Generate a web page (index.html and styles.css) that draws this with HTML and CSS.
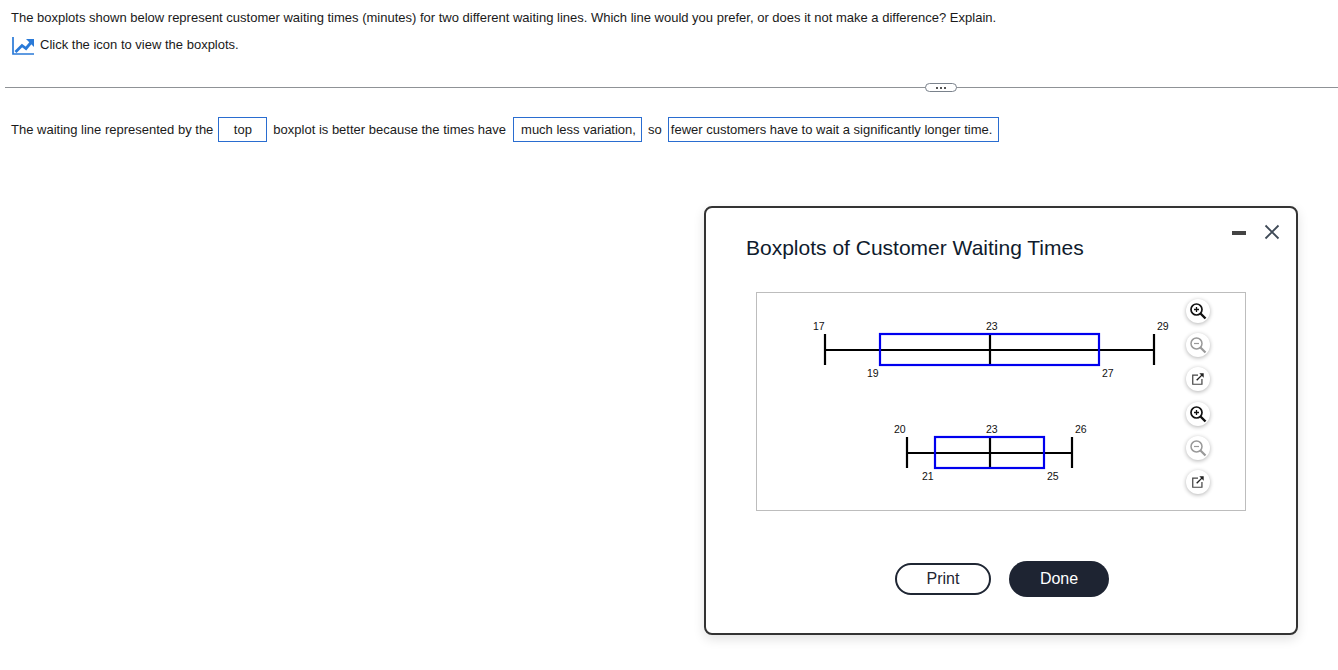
FILE: index.html
```html
<!DOCTYPE html>
<html lang="en">
<head>
    <meta charset="UTF-8">
    <title>Boxplots of Customer Waiting Times</title>
    <link rel="stylesheet" href="styles.css">
</head>
<body>
    <!-- Question -->
    <div class="question">
        <p class="question-text">The boxplots shown below represent customer waiting times (minutes) for two different waiting lines. Which line would you prefer, or does it not make a difference? Explain.</p>
        <p class="icon-line">
            <svg class="chart-icon" width="22" height="18" viewBox="0 0 22 18">
                <path d="M1 0V17H22" fill="none" stroke="#2a7ad8" stroke-width="1.7"/>
                <path d="M3.5 15L10 8.5L14 11.5L19 5.5" fill="none" stroke="#2a7ad8" stroke-width="2.8"/>
                <path d="M14 2H22V10Z" fill="#2a7ad8"/>
            </svg>
            <span>Click the icon to view the boxplots.</span>
        </p>
    </div>

    <!-- Separator -->
    <div class="separator">
        <div class="more-btn">
            <span class="dot"></span><span class="dot"></span><span class="dot"></span>
        </div>
    </div>

    <!-- Answer -->
    <div class="answer">
        <span>The waiting line represented by the</span>
        <span class="choice choice-top">top</span>
        <span>boxplot is better because the times have</span>
        <span class="choice choice-much">much less variation,</span>
        <span>so</span>
        <span class="choice choice-fewer">fewer customers have to wait a significantly longer time.</span>
    </div>

    <!-- Floating window -->
    <div class="dialog">
        <div class="dialog-controls">
            <span class="minimize"></span>
            <svg width="16" height="16" viewBox="0 0 16 16">
                <path d="M1.5 1.5L14.5 14.5M14.5 1.5L1.5 14.5" stroke="#3f4a57" stroke-width="1.8"/>
            </svg>
        </div>
        <h1 class="dialog-title">Boxplots of Customer Waiting Times</h1>

        <div class="plot">
            <svg class="plot-svg" width="424" height="217" viewBox="757 293 424 217">
                <g class="whisker">
                    <path d="M825 334V365M1154 334V365M825 350H1154M990 334V365"/>
                    <path d="M907 437V468M1072 437V468M907 453H1072M990 437V468"/>
                </g>
                <rect class="box" x="880" y="334" width="219" height="31"/>
                <rect class="box" x="935" y="437" width="109" height="31"/>
                <g class="plot-label">
                    <text x="813" y="330">17</text>
                    <text x="986" y="330">23</text>
                    <text x="1157" y="330">29</text>
                    <text x="867" y="377">19</text>
                    <text x="1102" y="377">27</text>
                    <text x="894" y="433">20</text>
                    <text x="986" y="433">23</text>
                    <text x="1075" y="433">26</text>
                    <text x="922" y="480">21</text>
                    <text x="1047" y="480">25</text>
                </g>
            </svg>

            <div class="tools">
                <div class="tool-group">
                    <button class="tool">
                        <svg width="18" height="18" viewBox="0 0 18 18"><circle cx="7.5" cy="7.5" r="5.5" fill="none" stroke="#111" stroke-width="1.7"/><path d="M11.5 11.5L16.5 16.5" stroke="#111" stroke-width="2.4"/><path d="M5 7.5H10M7.5 5V10" stroke="#111" stroke-width="1.3"/></svg>
                    </button>
                    <button class="tool">
                        <svg width="18" height="18" viewBox="0 0 18 18"><circle cx="7.5" cy="7.5" r="5.5" fill="none" stroke="#999" stroke-width="1.5"/><path d="M11.5 11.5L16.5 16.5" stroke="#999" stroke-width="2.2"/><path d="M5 7.5H10" stroke="#999" stroke-width="1.2"/></svg>
                    </button>
                    <button class="tool">
                        <svg width="14" height="14" viewBox="0 0 16 16"><path d="M8 3.5H2V14H12.5V8" fill="none" stroke="#444" stroke-width="1.4"/><path d="M6.5 9.5L13 3" stroke="#222" stroke-width="1.6"/><path d="M9.5 1.5H14.5V6.5Z" fill="#222"/></svg>
                    </button>
                </div>
                <div class="tool-group">
                    <button class="tool">
                        <svg width="18" height="18" viewBox="0 0 18 18"><circle cx="7.5" cy="7.5" r="5.5" fill="none" stroke="#111" stroke-width="1.7"/><path d="M11.5 11.5L16.5 16.5" stroke="#111" stroke-width="2.4"/><path d="M5 7.5H10M7.5 5V10" stroke="#111" stroke-width="1.3"/></svg>
                    </button>
                    <button class="tool">
                        <svg width="18" height="18" viewBox="0 0 18 18"><circle cx="7.5" cy="7.5" r="5.5" fill="none" stroke="#999" stroke-width="1.5"/><path d="M11.5 11.5L16.5 16.5" stroke="#999" stroke-width="2.2"/><path d="M5 7.5H10" stroke="#999" stroke-width="1.2"/></svg>
                    </button>
                    <button class="tool">
                        <svg width="14" height="14" viewBox="0 0 16 16"><path d="M8 3.5H2V14H12.5V8" fill="none" stroke="#444" stroke-width="1.4"/><path d="M6.5 9.5L13 3" stroke="#222" stroke-width="1.6"/><path d="M9.5 1.5H14.5V6.5Z" fill="#222"/></svg>
                    </button>
                </div>
            </div>
        </div>

        <div class="dialog-buttons">
            <button class="btn-print">Print</button>
            <button class="btn-done">Done</button>
        </div>
    </div>
</body>
</html>
```

FILE: styles.css
```css
body {
    margin: 0;
    font-family: "Liberation Sans", Arial, sans-serif;
    font-size: 13px;
    color: #1a1a1a;
    background-color: #fff;
}
.question {
    padding: 10px 0 0 11px;
}
.question-text {
    margin: 0;
    line-height: 16px;
}
.icon-line {
    display: flex;
    align-items: flex-start;
    gap: 6px;
    margin: 11px 0 0 1px;
    line-height: 16px;
}
.chart-icon {
    display: block;
}
.separator {
    position: relative;
    height: 1px;
    margin: 32px 0 0 5px;
    background-color: #8f9296;
}
.more-btn {
    position: absolute;
    left: 920px;
    top: -4px;
    width: 32px;
    height: 9px;
    box-sizing: border-box;
    border: 1.5px solid #7a828c;
    border-radius: 5px;
    background-color: #fff;
    display: flex;
    align-items: center;
    justify-content: center;
    gap: 2px;
}
.dot {
    width: 2px;
    height: 2px;
    background-color: #555;
}
.answer {
    display: flex;
    align-items: center;
    margin: 29px 0 0 11px;
    height: 25px;
}
.choice {
    box-sizing: border-box;
    height: 25px;
    line-height: 24px;
    border: 1px solid #2a6dd0;
    white-space: nowrap;
}
.choice-top {
    width: 49px;
    margin: 0 6px 0 5px;
    text-align: center;
}
.choice-much {
    width: 129px;
    margin: 0 6px 0 7px;
    padding-left: 7px;
}
.choice-fewer {
    width: 331px;
    margin-left: 6px;
    padding-left: 2px;
}

/* Floating window */
.dialog {
    position: absolute;
    left: 704px;
    top: 206px;
    width: 594px;
    height: 429px;
    box-sizing: border-box;
    padding: 0 50px;
    background-color: #fff;
    border: 2px solid #333;
    border-radius: 8px;
    box-shadow: 0 4px 12px rgba(0, 0, 0, 0.12);
}
.dialog-controls {
    position: absolute;
    top: 16px;
    right: 16px;
    display: flex;
    align-items: center;
    gap: 18px;
}
.minimize {
    width: 14px;
    height: 4px;
    margin-top: 2px;
    background-color: #444;
}
.dialog-title {
    margin: 27px 0 0 -10px;
    font-size: 21px;
    line-height: 26px;
    font-weight: normal;
    color: #0f1b2d;
}
.plot {
    display: flex;
    width: 490px;
    height: 219px;
    box-sizing: border-box;
    margin-top: 31px;
    border: 1px solid #bdbdbd;
}
.plot-svg {
    display: block;
}
.whisker path {
    fill: none;
    stroke: #000;
    stroke-width: 2.2;
}
.box {
    fill: none;
    stroke: #0000ee;
    stroke-width: 2.2;
}
.plot-label text {
    font-size: 10.5px;
    fill: #111;
}
.tools {
    display: flex;
    flex-direction: column;
    gap: 11px;
    padding: 6px 0 0 5px;
}
.tool-group {
    display: flex;
    flex-direction: column;
    gap: 10px;
}
.tool {
    display: flex;
    align-items: center;
    justify-content: center;
    width: 24px;
    height: 24px;
    padding: 0;
    border: none;
    border-radius: 50%;
    background-color: #fff;
    box-shadow: 0 1px 4px rgba(0, 0, 0, 0.3);
}
.dialog-buttons {
    display: flex;
    align-items: center;
    justify-content: center;
    gap: 18px;
    margin: 50px 0 0 2px;
}
.btn-print, .btn-done {
    font-family: "Liberation Sans", Arial, sans-serif;
    font-size: 16px;
    border-radius: 18px;
}
.btn-print {
    width: 96px;
    height: 32px;
    background-color: #fff;
    border: 2px solid #1f2633;
    color: #1f2633;
}
.btn-done {
    width: 100px;
    height: 36px;
    background-color: #1e2432;
    border: none;
    color: #fff;
}
```
